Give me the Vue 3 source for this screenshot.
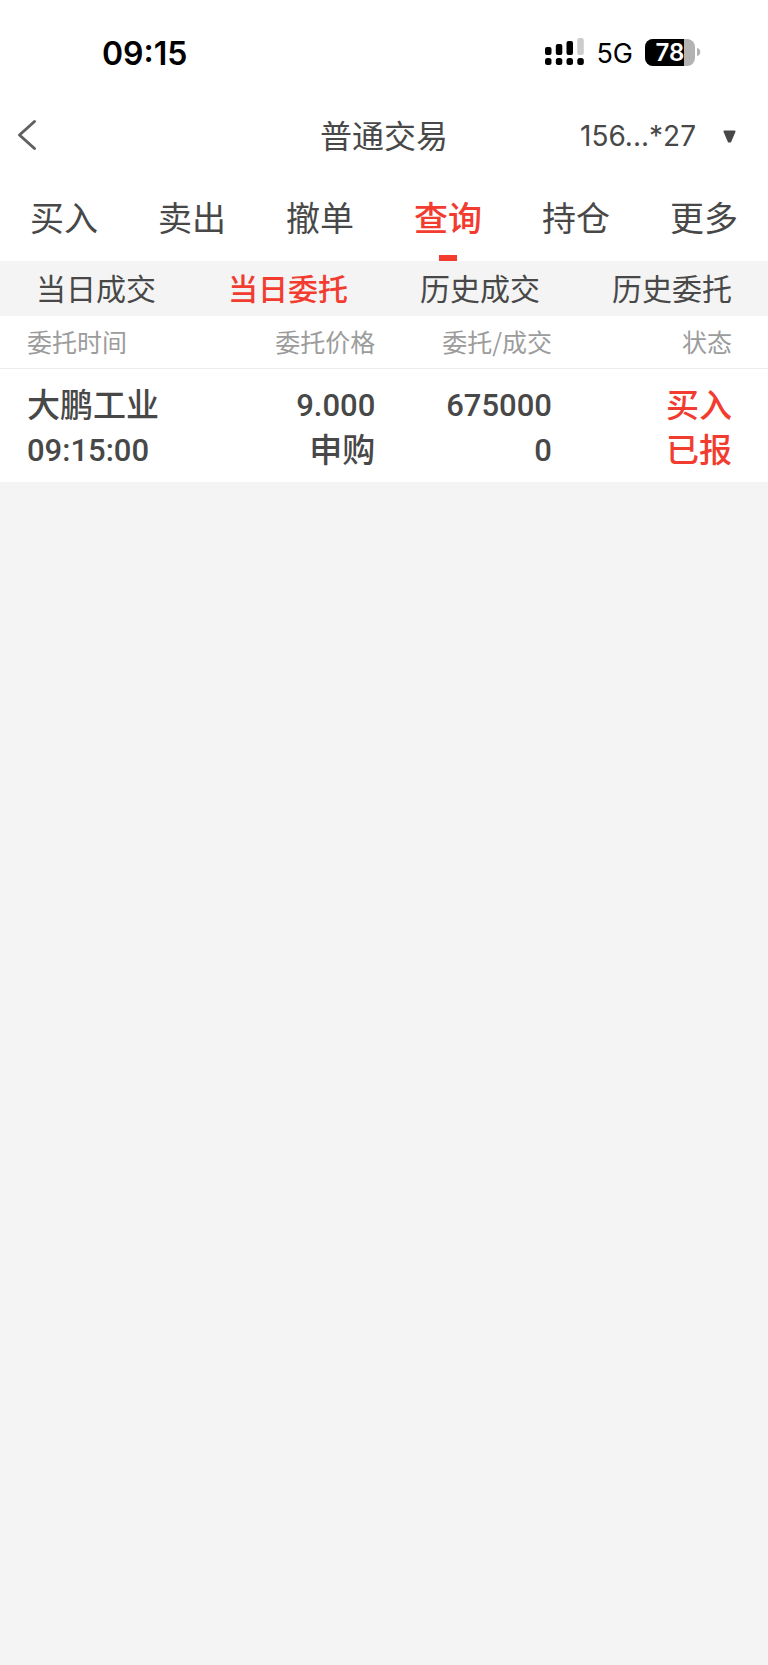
<script setup>
import { ref } from "vue";

const battery = 78;

const accounts = ["156...*27"];
const account = ref(accounts[0]);

const tabs = ["买入", "卖出", "撤单", "查询", "持仓", "更多"];
const activeTab = ref("查询");

const subTabs = ["当日成交", "当日委托", "历史成交", "历史委托"];
const activeSubTab = ref("当日委托");

const columns = ["委托时间", "委托价格", "委托/成交", "状态"];
const orders = [
  {
    name: "大鹏工业",
    time: "09:15:00",
    price: "9.000",
    type: "申购",
    amount: "675000",
    filled: "0",
    side: "买入",
    status: "已报",
  },
];
</script>

<template>
  <div class="page">
    <div class="status-bar">
      <span class="clock">09:15</span>
      <div class="indicators">
        <svg class="signal" width="39" height="28" viewBox="0 0 39 28">
          <rect x="0" y="9" width="6.500" height="8" rx="2" />
          <rect x="10.800" y="6" width="6.500" height="11" rx="2" />
          <rect x="21.500" y="3" width="6.500" height="14" rx="2" />
          <rect class="weak" x="32.300" y="0" width="6.500" height="17" rx="2" />
          <rect x="0" y="20" width="6.500" height="7" rx="2.500" />
          <rect x="10.800" y="20" width="6.500" height="7" rx="2.500" />
          <rect x="21.500" y="20" width="6.500" height="7" rx="2.500" />
          <rect x="32.300" y="20" width="6.500" height="7" rx="2.500" />
        </svg>
        <span class="network">5G</span>
        <div class="battery">
          <div class="battery-body">
            <div class="battery-level" :style="{ width: battery + '%' }"></div>
            <span class="battery-text">{{ battery }}</span>
          </div>
          <svg width="4" height="10" viewBox="0 0 4 10">
            <path d="M0 1C4.500 2 4.500 8 0 9Z" fill="#b3b3b3" />
          </svg>
        </div>
      </div>
    </div>

    <header class="nav">
      <button type="button" class="back" aria-label="返回">
        <svg width="20" height="32" viewBox="0 0 20 32">
          <path d="M17.500 2.500L2.500 16L17.500 29.500" />
        </svg>
      </button>
      <h1 class="title">普通交易</h1>
      <label class="account">
        <select v-model="account" aria-label="账户">
          <option v-for="a in accounts" :key="a" :value="a">{{ a }}</option>
        </select>
        <svg width="13" height="13" viewBox="0 0 13 13">
          <path d="M1.500 1.500H11.500L7.200 11.500H5.800Z" />
        </svg>
      </label>
    </header>

    <nav class="tabs">
      <button
        v-for="tab in tabs"
        :key="tab"
        type="button"
        :class="{ active: tab === activeTab }"
        @click="activeTab = tab"
      >
        {{ tab }}
      </button>
    </nav>

    <nav class="sub-tabs">
      <button
        v-for="tab in subTabs"
        :key="tab"
        type="button"
        :class="{ active: tab === activeSubTab }"
        @click="activeSubTab = tab"
      >
        {{ tab }}
      </button>
    </nav>

    <table class="orders">
      <thead>
        <tr>
          <th v-for="column in columns" :key="column">{{ column }}</th>
        </tr>
      </thead>
      <tbody>
        <tr v-for="order in orders" :key="order.name + order.time">
          <td>
            <div>{{ order.name }}</div>
            <div class="number">{{ order.time }}</div>
          </td>
          <td>
            <div class="number">{{ order.price }}</div>
            <div>{{ order.type }}</div>
          </td>
          <td>
            <div class="number">{{ order.amount }}</div>
            <div class="number">{{ order.filled }}</div>
          </td>
          <td class="state">
            <div>{{ order.side }}</div>
            <div>{{ order.status }}</div>
          </td>
        </tr>
      </tbody>
    </table>
  </div>
</template>

<style>
body {
  background-color: #f4f4f4;
}
</style>

<style scoped>
.page {
  min-height: 100vh;
  background-color: #f4f4f4;
  color: #484848;
  font-family: "Noto Sans CJK SC", sans-serif;
}
button,
select {
  margin: 0;
  padding: 0;
  border: none;
  background: none;
  color: inherit;
  font-family: inherit;
  cursor: pointer;
}
.status-bar {
  display: flex;
  justify-content: space-between;
  align-items: center;
  height: 104px;
  padding: 0 67px 0 102px;
  background-color: #fff;
  color: #000;
  font-family: Inter, sans-serif;
}
.clock {
  padding-top: 2px;
  font-size: 32px;
  font-weight: 600;
}
.indicators {
  display: flex;
  align-items: center;
}
.signal .weak {
  fill: #ccc;
}
.network {
  margin: 0 12px;
  padding-top: 2px;
  font-size: 27px;
}
.battery {
  display: flex;
  align-items: center;
  gap: 2px;
}
.battery-body {
  position: relative;
  width: 50px;
  height: 27px;
  border-radius: 8px;
  overflow: hidden;
  background-color: #b3b3b3;
}
.battery-level {
  height: 100%;
  background-color: #000;
}
.battery-text {
  position: absolute;
  inset: 0;
  color: #fff;
  font-size: 24px;
  font-weight: 600;
  line-height: 27px;
  text-align: center;
}
.nav {
  display: grid;
  grid-template-columns: 1fr auto 1fr;
  align-items: center;
  height: 62px;
  padding: 0 17px;
  background-color: #fff;
}
.back {
  display: flex;
  justify-self: start;
}
.back path {
  fill: none;
  stroke: #606060;
  stroke-width: 3;
  stroke-linecap: round;
  stroke-linejoin: round;
}
.title {
  margin: 0;
  padding-bottom: 3px;
  font-size: 32px;
  font-weight: 400;
  line-height: 46px;
}
.account {
  display: flex;
  justify-self: end;
  align-items: center;
  gap: 27px;
  padding-top: 2px;
  padding-right: 15px;
}
.account select {
  appearance: none;
  font-family: Inter, sans-serif;
  font-size: 28px;
}
.account path {
  fill: #484848;
  stroke: #484848;
  stroke-width: 2;
  stroke-linejoin: round;
}
.tabs {
  display: flex;
  background-color: #fff;
}
.tabs button {
  position: relative;
  flex: 1;
  height: 95px;
  padding-top: 6px;
  font-size: 34px;
}
.tabs .active {
  color: #f23c30;
  font-weight: 500;
}
.tabs .active::after {
  content: "";
  position: absolute;
  bottom: 0;
  left: calc(50% - 9px);
  width: 18px;
  height: 6px;
  background-color: #f23c30;
}
.sub-tabs {
  display: flex;
}
.sub-tabs button {
  flex: 1;
  height: 55px;
  padding-bottom: 3px;
  font-size: 30px;
}
.sub-tabs .active {
  color: #f23c30;
  font-weight: 500;
}
.orders {
  width: 100%;
  table-layout: fixed;
  border-collapse: collapse;
  background-color: #fff;
}
.orders th,
.orders td {
  box-sizing: border-box;
  padding: 0 1px 0 0;
  text-align: right;
}
.orders th {
  height: 52px;
  padding-bottom: 2px;
  border-bottom: 1px solid #ececec;
  color: #9c9c9c;
  font-size: 25px;
  font-weight: 400;
  line-height: 36px;
}
.orders th:nth-child(1) {
  width: 25%;
}
.orders th:nth-child(2) {
  width: 24%;
}
.orders th:nth-child(3) {
  width: 23%;
}
.orders th:first-child,
.orders td:first-child {
  padding-left: 27px;
  text-align: left;
}
.orders th:last-child,
.orders td:last-child {
  padding-right: 36px;
}
.orders td {
  padding-top: 14px;
  padding-bottom: 9px;
  font-family: Roboto, "Noto Sans CJK SC", sans-serif;
  font-size: 33px;
  font-weight: 500;
  line-height: 45px;
}
.orders .number {
  font-size: 31px;
}
.orders .state {
  color: #f23c30;
}
</style>
